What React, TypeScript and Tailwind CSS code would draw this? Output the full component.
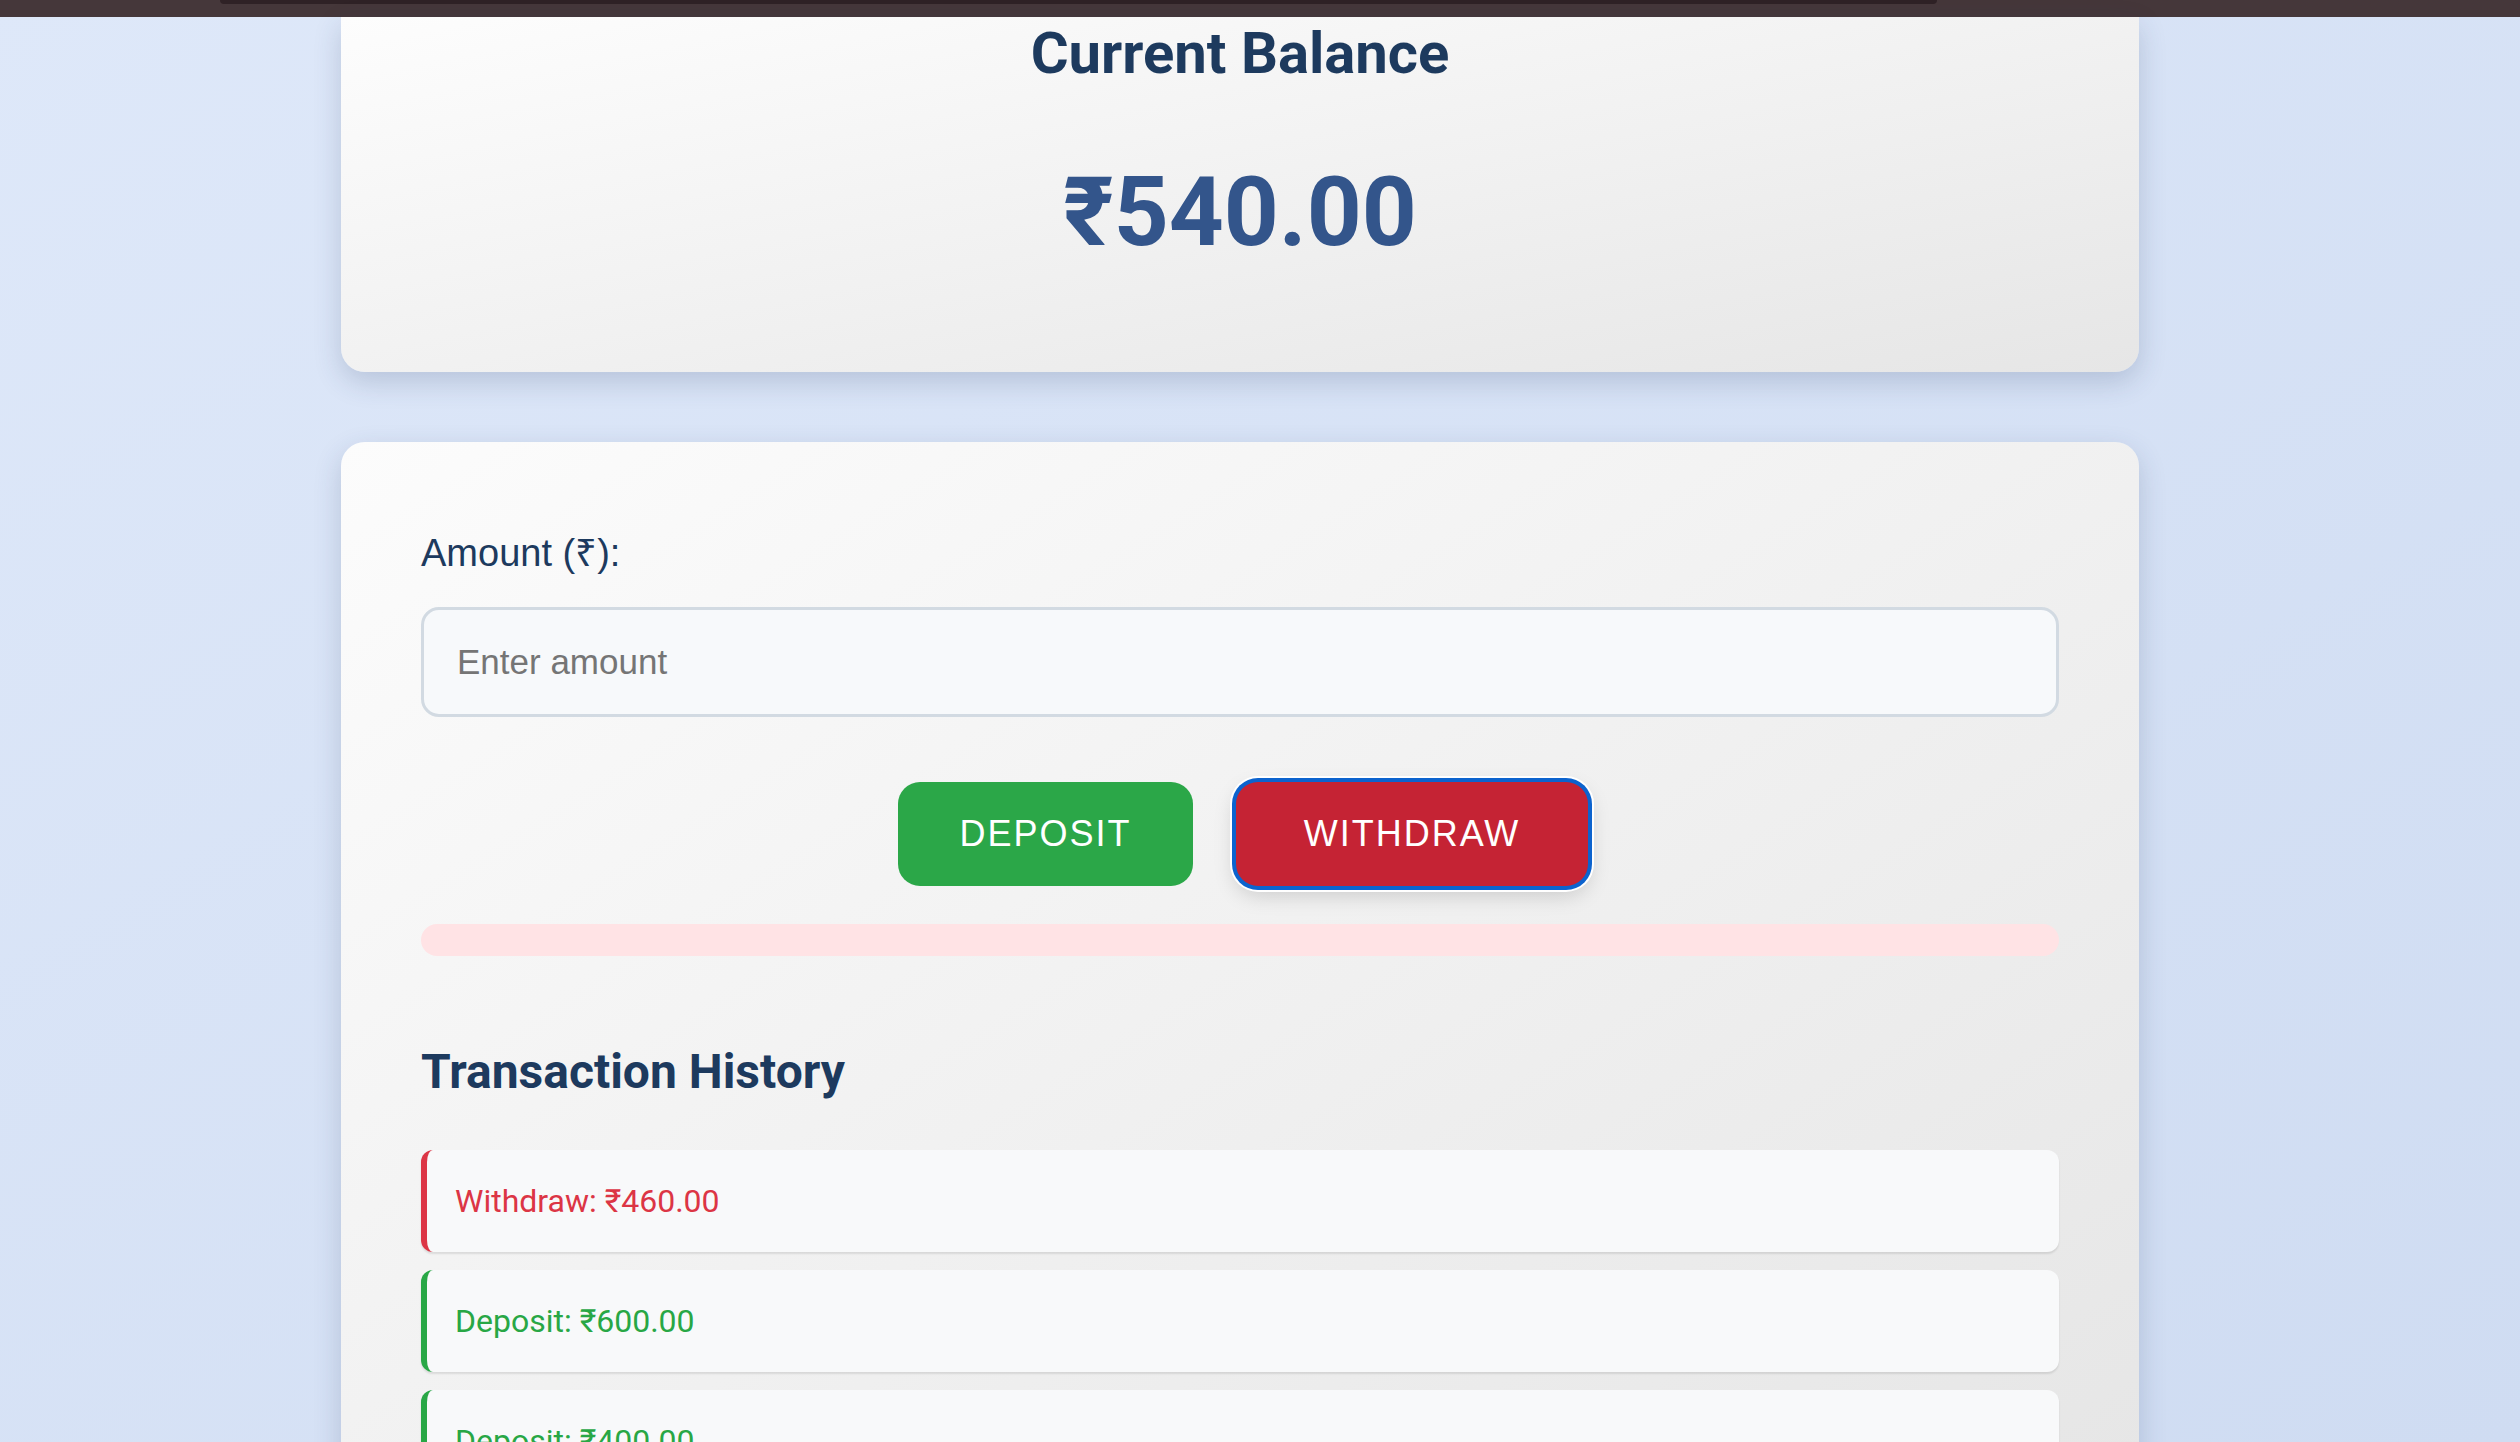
const transactions = [
  { type: "Withdraw", amount: 460 },
  { type: "Deposit", amount: 600 },
  { type: "Deposit", amount: 400 },
];

const App = () => {
  return (
    <div className="h-[1442px] w-full overflow-hidden bg-linear-to-br from-[#dee8f9] to-[#cfdcf2]">
      {/* browser top strip */}
      <div className="h-[17px] w-full bg-[#45373a] pl-[220px]">
        <div className="h-[4px] w-[1717px] rounded-b-md bg-[#2f2226]" />
      </div>

      <div className="flex flex-col items-center pr-[40px]">
        <div className="w-[1798px] rounded-b-[24px] bg-linear-to-br from-[#fdfdfd] to-[#e6e6e6] pt-[7px] pb-[112px] text-center shadow-[0_10px_28px_rgba(40,60,100,0.2)]">
          <h2 className="font-['Roboto',sans-serif] text-[58px] leading-none font-bold text-[#1d3a5e]">
            Current Balance
          </h2>
          <p className="mt-[82px] font-['Roboto',sans-serif] text-[96px] leading-none font-bold text-[#33558b]">
            ₹540.00
          </p>
        </div>

        <div className="mt-[70px] w-[1798px] rounded-[24px] bg-linear-to-br from-[#fcfcfc] to-[#e5e5e5] px-[80px] pt-[92px] pb-[80px] shadow-[0_10px_28px_rgba(40,60,100,0.2)]">
          <label className="block font-['Liberation_Sans',Arial,sans-serif] text-[38px] leading-none text-[#1d3a5e]">
            Amount (₹):
          </label>
          <input
            type="number"
            placeholder="Enter amount"
            className="mt-[35px] block h-[110px] w-full rounded-[18px] border-[3px] border-[#d2dae2] bg-[#f7f9fb] px-[33px] font-['Liberation_Sans',Arial,sans-serif] text-[35px] text-[#333] outline-none placeholder:text-[#757575]"
          />

          <div className="mt-[65px] flex justify-center gap-[43px] pl-[6px]">
            <button className="flex h-[104px] w-[295px] items-center justify-center rounded-[22px] bg-[#2ba748] font-['Liberation_Sans',Arial,sans-serif] text-[36px] tracking-[2px] text-white">
              DEPOSIT
            </button>
            <button className="flex h-[104px] w-[352px] items-center justify-center rounded-[22px] bg-[#c52334] font-['Liberation_Sans',Arial,sans-serif] text-[36px] tracking-[2px] text-white shadow-[0_0_0_4px_#0c63ce,0_0_0_6px_#ffffff,0_8px_22px_rgba(0,0,0,0.18)]">
              WITHDRAW
            </button>
          </div>

          <div className="mt-[38px] h-[32px] rounded-[16px] bg-[#ffe3e5]" />

          <h3 className="mt-[92px] font-['Roboto',sans-serif] text-[48px] leading-none font-bold text-[#1d3a5e]">
            Transaction History
          </h3>

          <ul className="mt-[54px] flex flex-col gap-[18px]">
            {transactions.map((t, i) => (
              <li
                key={i}
                className={
                  t.type === "Withdraw"
                    ? "flex h-[102px] items-center rounded-[12px] border-l-[6px] border-[#dc3545] bg-[#f8f9fa] pl-[28px] font-['Roboto',sans-serif] text-[32px] text-[#dc3545] shadow-[0_2px_2px_rgba(0,0,0,0.1)]"
                    : "flex h-[102px] items-center rounded-[12px] border-l-[6px] border-[#28a745] bg-[#f8f9fa] pl-[28px] font-['Roboto',sans-serif] text-[32px] text-[#28a745] shadow-[0_2px_2px_rgba(0,0,0,0.1)]"
                }
              >
                {t.type}: ₹{t.amount.toFixed(2)}
              </li>
            ))}
          </ul>
        </div>
      </div>
    </div>
  );
};

export default App;
